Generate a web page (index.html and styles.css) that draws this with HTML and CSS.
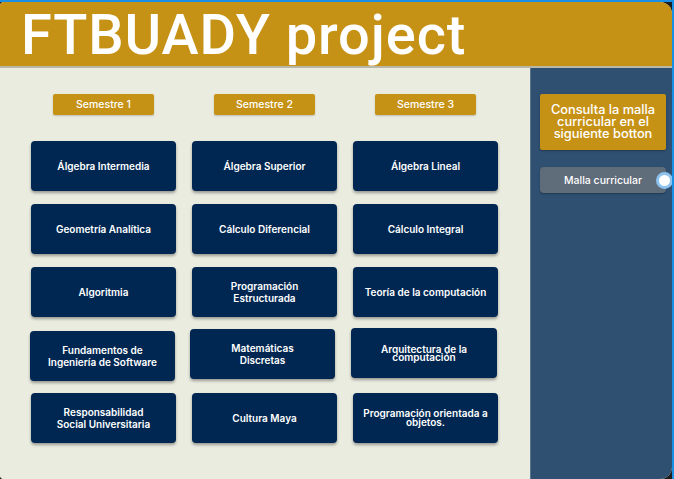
FILE: index.html
```html
<!DOCTYPE html>
<html lang="es">
<head>
<meta charset="utf-8">
<title>FTBUADY project</title>
<link rel="stylesheet" href="styles.css">
</head>
<body>
<div class="frame">
  <div class="app">
    <header class="header">
      <h1 class="title">FTBUADY project</h1>
    </header>
    <div class="body">
      <main class="main">
        <div class="grid">
          <div class="sem">Semestre 1</div>
          <div class="sem">Semestre 2</div>
          <div class="sem">Semestre 3</div>

          <div class="card">Álgebra Intermedia</div>
          <div class="card">Álgebra Superior</div>
          <div class="card">Álgebra Lineal</div>

          <div class="card">Geometría Analítica</div>
          <div class="card">Cálculo Diferencial</div>
          <div class="card">Cálculo Integral</div>

          <div class="card">Algoritmia</div>
          <div class="card">Programación<br>Estructurada</div>
          <div class="card">Teoría de la computación</div>

          <div class="card card-r4a">Fundamentos de<br>Ingeniería de Software</div>
          <div class="card card-r4b">Matemáticas<br>Discretas</div>
          <div class="card card-r4c card-tight">Arquitectura de la<br>computación</div>

          <div class="card">Responsabilidad<br>Social Universitaria</div>
          <div class="card">Cultura Maya</div>
          <div class="card card-tight2">Programación orientada a<br>objetos.</div>
        </div>
      </main>
      <aside class="side">
        <div class="info">Consulta la malla<br>curricular en el<br>siguiente botton</div>
        <div class="btn-wrap">
          <div class="btn">Malla curricular</div>
          <span class="knob"></span>
        </div>
      </aside>
    </div>
  </div>
</div>
</body>
</html>
```

FILE: styles.css
```css
* { box-sizing: border-box; }

html, body {
  margin: 0;
  padding: 0;
}

body {
  width: 674px;
  height: 479px;
  background: #1a8fe6;
  overflow: hidden;
  font-family: "Inter", "Roboto", sans-serif;
}

.frame {
  margin: 2px 2px 0 0;
  height: 477px;
  background: #1e1e1e;
}

.app {
  height: 100%;
  border-radius: 4px 12px 12px 4px;
  overflow: hidden;
  display: flex;
  flex-direction: column;
  background: #ebece0;
}

.header {
  flex: none;
  height: 66px;
  background: #c69216;
  display: flex;
  align-items: center;
  padding-left: 21px;
  border-bottom: 2px solid #b9b8a8;
}

.title {
  margin: 0;
  font-family: "Roboto", sans-serif;
  font-weight: 500;
  font-size: 56px;
  line-height: 1;
  color: #ffffff;
  letter-spacing: 0.9px;
  padding-top: 1px;
}

.body {
  flex: 1;
  display: flex;
}

.main {
  width: 530px;
  flex: none;
  background: #ebece0;
  padding: 26px 0 0 31px;
}

.grid {
  display: grid;
  grid-template-columns: repeat(3, 145px);
  grid-template-rows: 34px;
  grid-auto-rows: 50px;
  column-gap: 16px;
  row-gap: 13px;
}

.sem {
  justify-self: center;
  align-self: start;
  width: 101px;
  height: 21px;
  background: #c69216;
  color: #ffffff;
  border-radius: 2px;
  font-size: 10.5px;
  font-weight: 500;
  display: flex;
  align-items: center;
  justify-content: center;
  box-shadow: 0 1px 2px rgba(0, 0, 0, 0.2);
}

.card {
  background: #002751;
  color: #ffffff;
  border-radius: 4px;
  box-shadow: 0 2px 3px rgba(0, 0, 0, 0.35);
  font-size: 10px;
  font-weight: 600;
  line-height: 12.5px;
  text-align: center;
  display: flex;
  align-items: center;
  justify-content: center;
}

.card-r4a { margin: 1px 1px -1px -1px; }
.card-r4b { margin: -1px 2px 1px -2px; }
.card-r4c { margin: -2px 1px 2px -2px; }

.card-tight { line-height: 8px; }
.card-tight2 { line-height: 9px; }

.side {
  flex: 1;
  background: #2f5071;
  border-left: 1px solid #5d7690;
  padding: 26px 0 0 9px;
  display: flex;
  flex-direction: column;
}

.info {
  width: 126px;
  height: 56px;
  background: #c69216;
  color: #ffffff;
  border-radius: 2px;
  font-size: 12.8px;
  font-weight: 500;
  line-height: 12px;
  text-align: center;
  display: flex;
  align-items: center;
  justify-content: center;
  box-shadow: 0 1px 2px rgba(0, 0, 0, 0.3);
}

.btn-wrap {
  position: relative;
  margin-top: 17px;
  width: 126px;
}

.btn {
  height: 26px;
  background: #5f6c7a;
  color: #ffffff;
  border-radius: 4px;
  font-size: 10.5px;
  font-weight: 500;
  display: flex;
  align-items: center;
  justify-content: center;
  box-shadow: 0 1px 2px rgba(0, 0, 0, 0.3);
}

.knob {
  position: absolute;
  left: 116px;
  top: 5px;
  width: 17px;
  height: 17px;
  border-radius: 50%;
  background: #ffffff;
  border: 3px solid #8ec3ef;
}
```
